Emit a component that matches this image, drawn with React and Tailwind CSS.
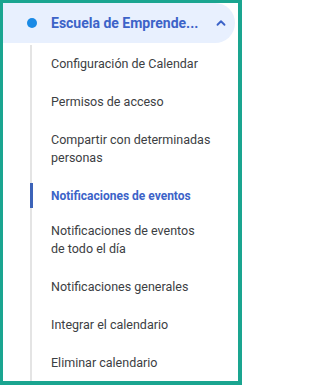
import React from 'react';

const items = [
  { lines: ['Configuración de Calendar'] },
  { lines: ['Permisos de acceso'] },
  { lines: ['Compartir con determinadas', 'personas'] },
  { lines: ['Notificaciones de eventos'], active: true },
  { lines: ['Notificaciones de eventos', 'de todo el día'] },
  { lines: ['Notificaciones generales'] },
  { lines: ['Integrar el calendario'] },
  { lines: ['Eliminar calendario'] },
];

const App = () => {
  return (
    <div
      className="w-[242px] h-[385px] bg-white border-t-[3px] border-l-[3px] border-r-[4px] border-b-[4px] border-[#1aa590] overflow-hidden"
      style={{ fontFamily: 'Roboto, "Liberation Sans", sans-serif' }}
    >
      {/* Calendar header */}
      <div className="flex items-center h-[40px] w-[232px] bg-[#e8f0fe] rounded-r-full pl-[24px] pr-[7px]">
        <span className="w-[10px] h-[10px] rounded-full bg-[#1a8ae5] shrink-0" />
        <span className="ml-[14px] flex-1 text-[14px] font-bold text-[#3c63c8] whitespace-nowrap overflow-hidden">
          Escuela de Emprende...
        </span>
        <svg width="14" height="14" viewBox="0 0 24 24" className="shrink-0">
          <path d="M6 15l6-6 6 6" fill="none" stroke="#3c63c8" strokeWidth="3.2" strokeLinecap="round" strokeLinejoin="round" />
        </svg>
      </div>

      {/* Sub items */}
      <div className="ml-[27px] mt-[2px] border-l-2 border-[#e4e4e4] flex flex-col">
        {items.map((item, i) => (
          <div
            key={i}
            className={`relative pt-[10px] pl-[19px] leading-[18px] whitespace-nowrap ${
              item.active
                ? 'pb-[7px] text-[12px] text-[#3c63c8] font-bold'
                : 'pb-[10px] text-[12.5px] text-[#3c4043]'
            }`}
          >
            {item.active && (
              <span className="absolute left-[-2px] top-[6px] bottom-[4px] w-[3px] bg-[#3c63b8]" />
            )}
            {item.lines.map((line, j) => (
              <div key={j}>{line}</div>
            ))}
          </div>
        ))}
      </div>
    </div>
  );
};

export default App;
